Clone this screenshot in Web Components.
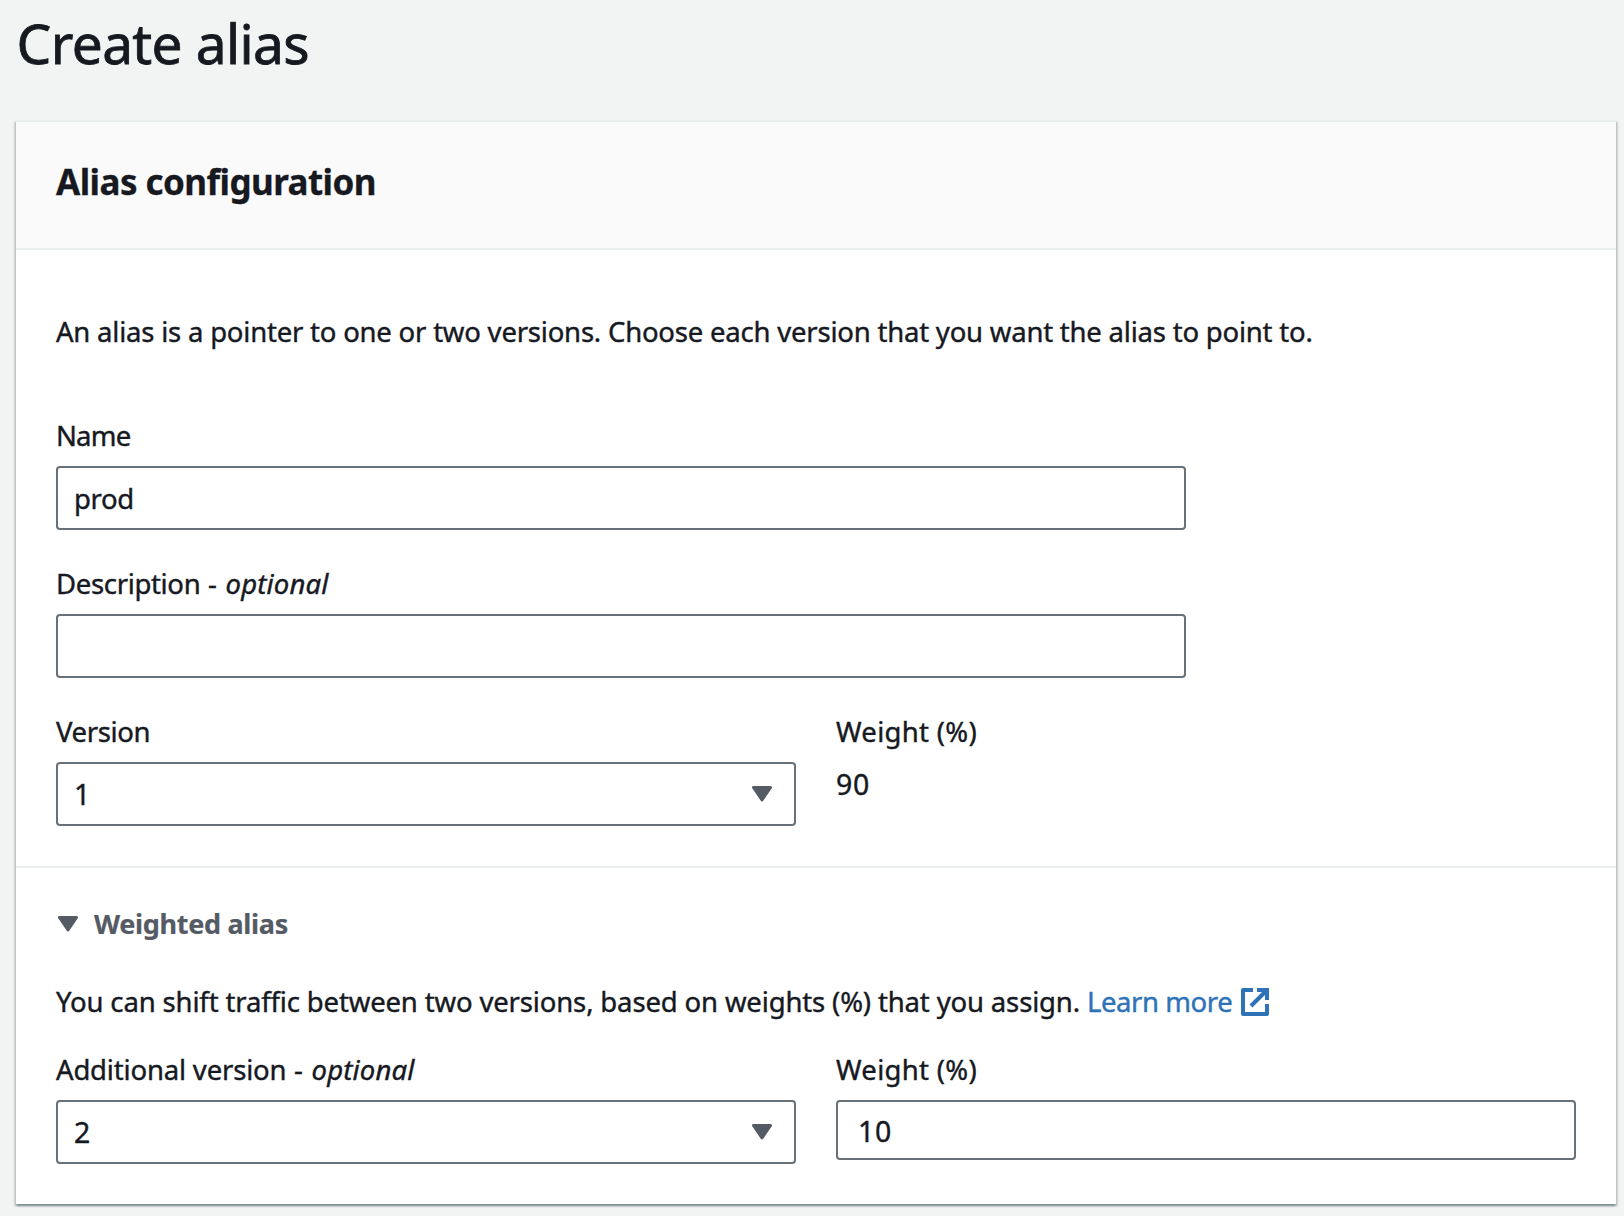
<!DOCTYPE html>
<html lang="en">
<head>
<meta charset="utf-8">
<title>Create alias</title>
<style>
body { margin: 0; background: #f2f4f3; color: #16191f; font-family: "Noto Sans", "Open Sans", sans-serif; font-size: 27.5px; line-height: 44px; -webkit-text-stroke: .4px; overflow: hidden; }
.gap { margin-top: 32px; }
</style>
</head>
<body>
<alias-page>
  <page-title slot="title">Create alias</page-title>
  <form-panel>
    <span slot="header">Alias configuration</span>
    <panel-section style="--pad-top:60px">
      <text-line style="letter-spacing:-.209px">An alias is a pointer to one or two versions. Choose each version that you want the alias to point to.</text-line>
      <form-field style="width:1130px;margin-top:60px;--track:-.8px">
        <span slot="label">Name</span>
        <text-box style="letter-spacing:-.4px;--drop:2px">prod</text-box>
      </form-field>
      <form-field class="gap" style="width:1130px;--track:-.33px" optional>
        <span slot="label">Description</span>
        <text-box></text-box>
      </form-field>
      <field-row class="gap">
        <form-field style="--track:-.354px"><span slot="label">Version</span><select-box>1</select-box></form-field>
        <form-field style="--track:.3px"><span slot="label">Weight (%)</span><number-text>90</number-text></form-field>
      </field-row>
    </panel-section>
    <panel-section style="--pad-top:34px;--line:2px">
      <expand-header>Weighted alias</expand-header>
      <text-line style="margin-top:34px;letter-spacing:-.15px">You can shift traffic between two versions, based on weights (%) that you assign. <external-link>Learn more</external-link></text-line>
      <field-row style="margin-top:24px">
        <form-field style="--track:-.18px" optional><span slot="label">Additional version</span><select-box>2</select-box></form-field>
        <form-field style="--track:.3px"><span slot="label">Weight (%)</span><text-box style="--box-height:60px;--inset:20px;--drop:1px"><number-text>10</number-text></text-box></form-field>
      </field-row>
    </panel-section>
  </form-panel>
</alias-page>
<script>
const define = (name, html) => {
  const template = document.createElement('template');
  template.innerHTML = html;
  customElements.define(name, class extends HTMLElement {
    constructor() {
      super();
      this.attachShadow({ mode: 'open' }).append(template.content.cloneNode(true));
    }
  });
};

define('alias-page', `<style>
  :host { display: flex; flex-direction: column; box-sizing: border-box; height: 1216px; padding: 0 8px 12px 16px; }
</style><slot name="title"></slot><slot></slot>`);

define('page-title', `<style>
  :host { display: block; box-sizing: border-box; height: 120px; padding: 7px 0 0 .6px; }
  h1 { margin: 0; font-size: 55px; line-height: 72px; font-weight: 400; letter-spacing: -.62px; -webkit-text-stroke: .8px; }
</style><h1><slot></slot></h1>`);

define('form-panel', `<style>
  :host { display: flex; flex-direction: column; background: #fff; border-top: 2px solid #eaeded;
    box-shadow: 0 2px 2px rgba(0,28,36,.3), 2px 2px 2px rgba(0,28,36,.15), -2px 2px 2px rgba(0,28,36,.15); }
  header { display: flex; align-items: center; box-sizing: border-box; height: 128px; padding: 0 40px 7px; background: #fafafa; border-bottom: 2px solid #eaeded; }
  h2 { margin: 0; font-size: 35px; font-weight: 700; letter-spacing: -.55px; -webkit-text-stroke: .3px; }
</style><header><h2><slot name="header"></slot></h2></header><slot></slot>`);

define('panel-section', `<style>
  :host { display: flex; flex-direction: column; padding: var(--pad-top) 40px 40px; border-top: var(--line, 0) solid #eaeded; }
</style><slot></slot>`);

define('text-line', `<style>:host { display: block; white-space: nowrap; }</style><slot></slot>`);

define('number-text', `<style>:host { display: block; font-size: 28.5px; letter-spacing: .6px; line-height: 44px; }</style><slot></slot>`);

define('form-field', `<style>
  :host { display: flex; flex-direction: column; gap: 8px; }
  label { display: block; letter-spacing: var(--track); white-space: nowrap; }
  .opt { display: none; letter-spacing: .4px; }
  i { letter-spacing: .16px; margin-left: .8px; }
  :host([optional]) .opt { display: inline; }
</style><label><slot name="label"></slot><span class="opt"> - <i>optional</i></span></label><slot></slot>`);

define('field-row', `<style>
  :host { display: grid; grid-template-columns: 1fr 1fr; gap: 40px; align-items: start; }
</style><slot></slot>`);

define('text-box', `<style>
  :host { display: flex; align-items: center; box-sizing: border-box; height: var(--box-height, 64px); padding: var(--drop, 0) var(--inset, 16px) 0; background: #fff; border: 2px solid #687078; border-radius: 4px; }
</style><slot></slot>`);

define('select-box', `<style>
  :host { display: flex; align-items: center; justify-content: space-between; box-sizing: border-box; height: 64px; padding: 0 22px 0 16px; background: #fff; border: 2px solid #687078; border-radius: 4px; font-size: 28.5px; }
</style><slot></slot><caret-icon></caret-icon>`);

define('caret-icon', `<style>
  :host { display: block; width: 20px; height: 16px; }
  svg { display: block; }
</style><svg width="20" height="16" viewBox="0 0 20 16"><path d="M1.5 1.5H18.5L10 14Z" fill="#545b64" stroke="#545b64" stroke-width="3" stroke-linejoin="round"/></svg>`);

define('expand-header', `<style>
  :host { display: flex; align-items: center; gap: 16px; padding-left: 2px; color: #545b64; font-size: 27px; font-weight: 700; letter-spacing: -.31px; -webkit-text-stroke: .2px; }
</style><caret-icon></caret-icon><span><slot></slot></span>`);

define('external-link', `<style>
  :host { display: inline; }
  a { display: inline-flex; align-items: center; gap: 9px; color: #2e73b8; letter-spacing: -.42px; text-decoration: none; vertical-align: top; }
  svg { display: block; }
</style><a><span><slot></slot></span><svg width="28" height="28" viewBox="0 0 28 28" fill="#2e73b8"><path d="M2 0H12V4H4V24H24V16H28V26Q28 28 26 28H2Q0 28 0 26V2Q0 0 2 0Z"/><path d="M16 0H28V12H24V7L11.4 19.4L8.5 16.6L21 4H16Z"/></svg></a>`);
</script>
</body>
</html>
